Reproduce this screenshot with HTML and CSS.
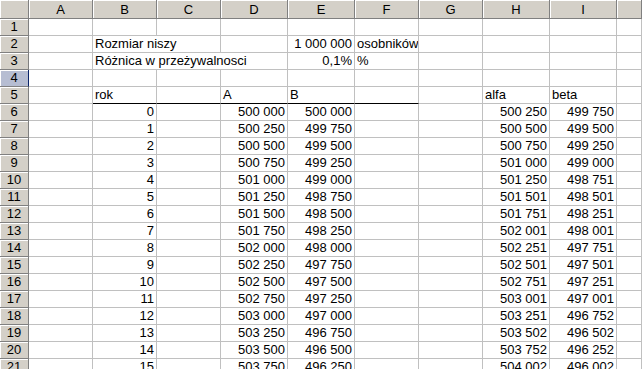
FILE: index.html
```html
<!DOCTYPE html>
<html lang="pl">

<head>
    <meta charset="UTF-8">
    <title>Arkusz1</title>
    <link rel="stylesheet" href="styles.css">
</head>

<body>
    <div class="sheet">
        <div class="row head"><b></b><b>A</b><b>B</b><b>C</b><b>D</b><b>E</b><b>F</b><b>G</b><b>H</b><b>I</b><b></b></div>
        <div class="row"><b>1</b><span></span><span></span><span></span><span></span><span></span><span></span><span></span><span></span><span></span><span></span></div>
        <div class="row"><b>2</b><span></span><span class="wide2">Rozmiar niszy</span><span></span><span class="n">1 000 000</span><span>osobników</span><span></span><span></span><span></span><span></span></div>
        <div class="row"><b>3</b><span></span><span class="wide3">Różnica w przeżywalnosci</span><span class="n">0,1%</span><span>%</span><span></span><span></span><span></span><span></span></div>
        <div class="row"><b class="sel">4</b><span></span><span></span><span></span><span></span><span></span><span></span><span></span><span></span><span></span><span></span></div>
        <div class="row"><b>5</b><span></span><span class="u">rok</span><span class="u"></span><span class="u">A</span><span class="u">B</span><span class="u"></span><span></span><span>alfa</span><span>beta</span><span></span></div>
        <div class="row"><b>6</b><span></span><span class="n">0</span><span></span><span class="n">500 000</span><span class="n">500 000</span><span></span><span></span><span class="n">500 250</span><span class="n">499 750</span><span></span></div>
        <div class="row"><b>7</b><span></span><span class="n">1</span><span></span><span class="n">500 250</span><span class="n">499 750</span><span></span><span></span><span class="n">500 500</span><span class="n">499 500</span><span></span></div>
        <div class="row"><b>8</b><span></span><span class="n">2</span><span></span><span class="n">500 500</span><span class="n">499 500</span><span></span><span></span><span class="n">500 750</span><span class="n">499 250</span><span></span></div>
        <div class="row"><b>9</b><span></span><span class="n">3</span><span></span><span class="n">500 750</span><span class="n">499 250</span><span></span><span></span><span class="n">501 000</span><span class="n">499 000</span><span></span></div>
        <div class="row"><b>10</b><span></span><span class="n">4</span><span></span><span class="n">501 000</span><span class="n">499 000</span><span></span><span></span><span class="n">501 250</span><span class="n">498 751</span><span></span></div>
        <div class="row"><b>11</b><span></span><span class="n">5</span><span></span><span class="n">501 250</span><span class="n">498 750</span><span></span><span></span><span class="n">501 501</span><span class="n">498 501</span><span></span></div>
        <div class="row"><b>12</b><span></span><span class="n">6</span><span></span><span class="n">501 500</span><span class="n">498 500</span><span></span><span></span><span class="n">501 751</span><span class="n">498 251</span><span></span></div>
        <div class="row"><b>13</b><span></span><span class="n">7</span><span></span><span class="n">501 750</span><span class="n">498 250</span><span></span><span></span><span class="n">502 001</span><span class="n">498 001</span><span></span></div>
        <div class="row"><b>14</b><span></span><span class="n">8</span><span></span><span class="n">502 000</span><span class="n">498 000</span><span></span><span></span><span class="n">502 251</span><span class="n">497 751</span><span></span></div>
        <div class="row"><b>15</b><span></span><span class="n">9</span><span></span><span class="n">502 250</span><span class="n">497 750</span><span></span><span></span><span class="n">502 501</span><span class="n">497 501</span><span></span></div>
        <div class="row"><b>16</b><span></span><span class="n">10</span><span></span><span class="n">502 500</span><span class="n">497 500</span><span></span><span></span><span class="n">502 751</span><span class="n">497 251</span><span></span></div>
        <div class="row"><b>17</b><span></span><span class="n">11</span><span></span><span class="n">502 750</span><span class="n">497 250</span><span></span><span></span><span class="n">503 001</span><span class="n">497 001</span><span></span></div>
        <div class="row"><b>18</b><span></span><span class="n">12</span><span></span><span class="n">503 000</span><span class="n">497 000</span><span></span><span></span><span class="n">503 251</span><span class="n">496 752</span><span></span></div>
        <div class="row"><b>19</b><span></span><span class="n">13</span><span></span><span class="n">503 250</span><span class="n">496 750</span><span></span><span></span><span class="n">503 502</span><span class="n">496 502</span><span></span></div>
        <div class="row"><b>20</b><span></span><span class="n">14</span><span></span><span class="n">503 500</span><span class="n">496 500</span><span></span><span></span><span class="n">503 752</span><span class="n">496 252</span><span></span></div>
        <div class="row"><b>21</b><span></span><span class="n">15</span><span></span><span class="n">503 750</span><span class="n">496 250</span><span></span><span></span><span class="n">504 002</span><span class="n">496 002</span><span></span></div>
    </div>
</body>

</html>
```

FILE: styles.css
```css
* {
    margin: 0;
    padding: 0;
    box-sizing: border-box;
}

body {
    width: 642px;
    height: 369px;
    overflow: hidden;
    background-color: #fff;
    color: #000;
    font-family: "Liberation Sans", Arial, sans-serif;
    font-size: 13px;
}

.sheet {
    width: 642px;
}

.row {
    display: grid;
    grid-template-columns: 29px 64px 64px 64px 67px 67px 64px 64px 67px 67px minmax(0, 1fr);
    height: 17px;
}

.row > span {
    border-right: 1px solid #c0c0c0;
    border-bottom: 1px solid #c0c0c0;
    padding: 0 2px;
    line-height: 16px;
    white-space: nowrap;
    overflow: hidden;
}

.row > b {
    font-weight: normal;
    text-align: center;
    line-height: 16px;
    background-color: #d4d0c8;
    border-right: 1px solid #808080;
    border-bottom: 1px solid #808080;
    box-shadow: inset 1px 1px 0 #fff;
}

.head {
    height: 19px;
}

.head > b {
    padding-top: 2px;
}

.n {
    text-align: right;
}

.wide2 {
    grid-column: span 2;
}

.wide3 {
    grid-column: span 3;
}

.row > .u {
    border-bottom-color: #000;
}

.row > .sel {
    background-color: #b6bdd2;
    border-right-color: #0a246a;
}
```
